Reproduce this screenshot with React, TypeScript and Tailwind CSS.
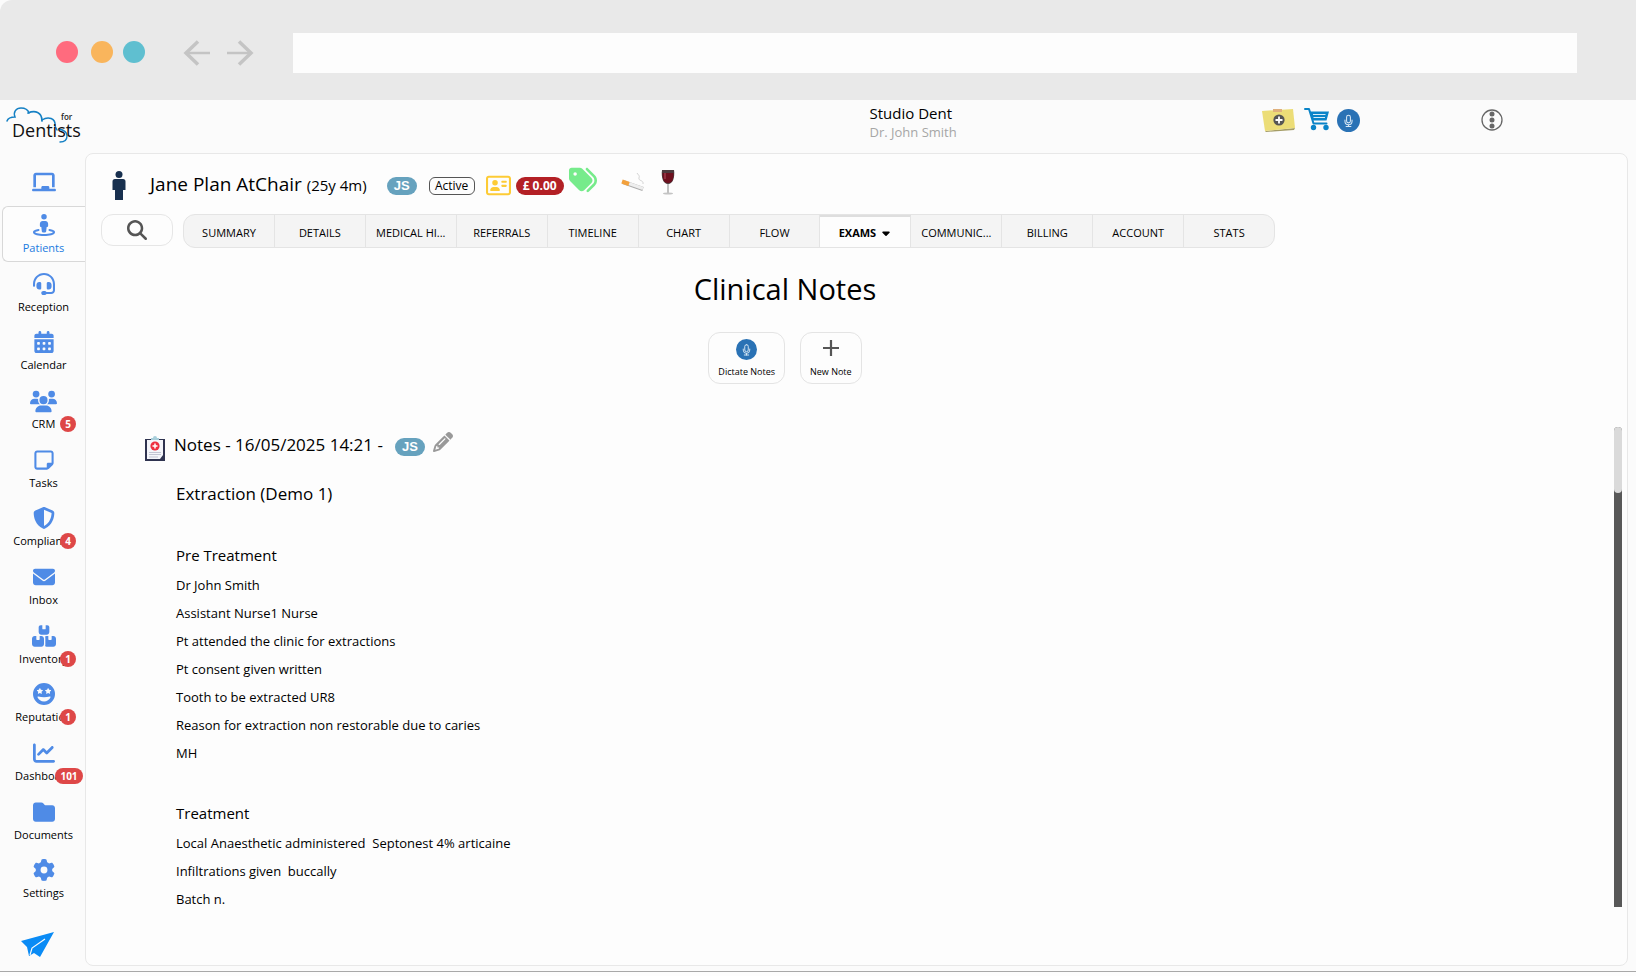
import type { ReactNode } from "react";
import type { IconType } from "react-icons";
import {
  FaBoxesStacked,
  FaCalendarDays,
  FaCaretDown,
  FaChalkboard,
  FaChartLine,
  FaEnvelope,
  FaFaceGrinStars,
  FaFolder,
  FaGear,
  FaHeadset,
  FaMagnifyingGlass,
  FaPencil,
  FaRegAddressCard,
  FaRegNoteSticky,
  FaShieldHalved,
  FaStreetView,
  FaTags,
  FaUsers,
} from "react-icons/fa6";

type NavItem = {
  label: string;
  icon: IconType;
  size?: number;
  badge?: number;
  active?: boolean;
};

const NAV: NavItem[] = [
  { label: "Patients", icon: FaStreetView, active: true },
  { label: "Reception", icon: FaHeadset },
  { label: "Calendar", icon: FaCalendarDays },
  { label: "CRM", icon: FaUsers, size: 27, badge: 5 },
  { label: "Tasks", icon: FaRegNoteSticky },
  { label: "Compliance", icon: FaShieldHalved, badge: 4 },
  { label: "Inbox", icon: FaEnvelope },
  { label: "Inventory", icon: FaBoxesStacked, size: 24, badge: 1 },
  { label: "Reputation", icon: FaFaceGrinStars, badge: 1 },
  { label: "Dashboard", icon: FaChartLine, badge: 101 },
  { label: "Documents", icon: FaFolder },
  { label: "Settings", icon: FaGear },
];

const TABS = [
  "SUMMARY",
  "DETAILS",
  "MEDICAL HI...",
  "REFERRALS",
  "TIMELINE",
  "CHART",
  "FLOW",
  "EXAMS",
  "COMMUNIC...",
  "BILLING",
  "ACCOUNT",
  "STATS",
];

const SECTIONS = [
  {
    title: "Pre Treatment",
    lines: [
      "Dr John Smith",
      "Assistant Nurse1 Nurse",
      "Pt attended the clinic for extractions",
      "Pt consent given written",
      "Tooth to be extracted UR8",
      "Reason for extraction non restorable due to caries",
      "MH",
    ],
  },
  {
    title: "Treatment",
    lines: [
      "Local Anaesthetic administered  Septonest 4% articaine",
      "Infiltrations given  buccally",
      "Batch n.",
    ],
  },
];

function BrowserBar() {
  return (
    <div className="flex h-[100px] shrink-0 items-center rounded-tl-xl bg-[#e9e9e9] pt-1 pr-[59px] pl-14">
      <span className="h-[22px] w-[22px] rounded-full bg-[#ff6b7e]" />
      <span className="ml-[13px] h-[22px] w-[22px] rounded-full bg-[#f9b55c]" />
      <span className="ml-[10px] h-[22px] w-[22px] rounded-full bg-[#5fbfd0]" />
      <button type="button" aria-label="Back" className="mt-[2px] ml-[38px]">
        <svg width="28" height="26" viewBox="0 0 28 26" fill="none" stroke="#c4c4c4" strokeWidth="3.5">
          <path d="M15 1.5 3 13l12 11.5" />
          <path d="M3 13h24" strokeWidth="2.5" />
        </svg>
      </button>
      <button type="button" aria-label="Forward" className="mt-[2px] ml-[15px]">
        <svg width="28" height="26" viewBox="0 0 28 26" fill="none" stroke="#c4c4c4" strokeWidth="3.5">
          <path d="m13 1.5 12 11.5-12 11.5" />
          <path d="M1 13h24" strokeWidth="2.5" />
        </svg>
      </button>
      <input
        type="text"
        aria-label="Address"
        className="mt-[2px] ml-[39px] h-10 min-w-0 flex-1 bg-[#fdfdfd] px-3 outline-none"
      />
    </div>
  );
}

function Logo() {
  return (
    <svg width="82" height="42" viewBox="0 0 82 42" role="img" aria-label="for Dentists">
      <g fill="none" stroke="#1580c4" strokeLinecap="round">
        <path d="M2 17c1-3 4-4 8-4C8 8 11 4 16 4c4 0 7 2 8 5" strokeWidth="1.5" />
        <path d="M23 9c7-3 14-1 14 8" strokeWidth="1.7" />
        <path d="M37 16c6-4 14-2 13 6l2 4" strokeWidth="1.5" />
        <path d="M54 25c5 1 8 4 8 7 0 4-3 6-7 6" strokeWidth="1.4" />
      </g>
      <text x="56" y="16" fontSize="8" fontWeight="600" fontFamily="Open Sans, sans-serif" fill="#222">
        for
      </text>
      <text x="7" y="33" fontSize="18" fontWeight="500" fontFamily="Open Sans, sans-serif" fill="#111">
        Dentists
      </text>
    </svg>
  );
}

function MicIcon({ size }: { size: number }) {
  return (
    <svg width={size} height={size} viewBox="0 0 24 24" fill="none">
      <circle cx="12" cy="12" r="12" fill="#2a72b5" />
      <g stroke="#d8e8f5" strokeWidth="1.1" strokeLinecap="round">
        <rect x="10" y="6.5" width="4" height="8" rx="2" />
        <path d="M8.3 11.5v1.2a3.7 3.7 0 0 0 7.4 0v-1.2M12 16.5v1.8M9.5 18.3h5" />
      </g>
    </svg>
  );
}

function StickyIcon() {
  return (
    <svg width="36" height="26" viewBox="0 0 36 26">
      <path d="m4 24 30-3-1 2-28 2z" fill="#a49c66" />
      <path d="M1 4 32 2l2 19-30 3z" fill="#ecdd77" />
      <path d="M12 2h9v3h-9z" fill="#dfb07c" />
      <circle cx="18" cy="13" r="5.6" fill="#555" />
      <path d="M18 9.5v7M14.5 13h7" stroke="#fff" strokeWidth="1.8" />
    </svg>
  );
}

function CartIcon() {
  return (
    <svg width="26" height="24" viewBox="0 0 26 24" fill="none">
      <path d="M1 2h4l4.5 14.5h13" stroke="#0a84c8" strokeWidth="2" strokeLinecap="round" strokeLinejoin="round" />
      <path d="M6 4.5h19l-2.5 9h-14z" fill="#0a84c8" />
      <path d="M9 7.5h12.5M9.5 10.5H21" stroke="#d7edf8" strokeWidth="1" />
      <circle cx="9.5" cy="20.5" r="2.7" fill="#0a84c8" />
      <circle cx="22" cy="20.5" r="2.7" fill="#0a84c8" />
    </svg>
  );
}

function MoreIcon() {
  return (
    <svg width="22" height="22" viewBox="0 0 22 22">
      <circle cx="11" cy="11" r="10" fill="none" stroke="#666" strokeWidth="1.3" />
      <circle cx="11" cy="5" r="2.5" fill="#666" />
      <circle cx="11" cy="11" r="2.5" fill="#666" />
      <circle cx="11" cy="17" r="2.5" fill="#666" />
    </svg>
  );
}

function PersonIcon() {
  return (
    <svg width="14" height="30" viewBox="0 0 14 30" fill="#18304f">
      <circle cx="7" cy="3.5" r="3.5" />
      <path d="M3 8h8a2.5 2.5 0 0 1 2.5 2.5V19H11v10H3V19H.5v-8.5A2.5 2.5 0 0 1 3 8z" />
    </svg>
  );
}

function CigaretteIcon() {
  return (
    <svg width="24" height="20" viewBox="0 0 24 20" fill="none">
      <path d="m2 10 20 7" stroke="#aaa" strokeWidth="4" />
      <path d="m2 9.5 20 7" stroke="#eee" strokeWidth="3" />
      <path d="m1 9.5 7 2.5" stroke="#f3a13c" strokeWidth="4" />
      <path d="M22 12c1-4-5-3-4-6s-1-3-2-5" stroke="#d4d4d4" strokeWidth="1" />
    </svg>
  );
}

function WineIcon() {
  return (
    <svg width="14" height="26" viewBox="0 0 14 26">
      <path d="M1 1h12c1 7-1 14-6 14S0 8 1 1z" fill="#4b3a3d" />
      <path d="M1.500 4h11c0 6-1 10-5.500 10S1.500 10 1.500 4z" fill="#6e0f1e" />
      <path d="M4 4v6" stroke="#b4505e" strokeWidth="1" />
      <path d="M7 15v9" stroke="#999" strokeWidth="1.2" />
      <ellipse cx="7" cy="24.5" rx="5" ry="1" fill="#c4c4c4" />
    </svg>
  );
}

function ClipboardIcon() {
  return (
    <svg width="20" height="26" viewBox="0 0 20 26">
      <path d="M0 3h20v22H0z" fill="#2f3350" />
      <path d="M2 4h16v15l-3 4H2z" fill="#f4f5fa" />
      <path d="M6 4V2h2a2 2 0 0 1 4 0h2v2z" fill="#a9cfdb" />
      <circle cx="10" cy="10" r="4.6" fill="#ee2f3f" />
      <path d="M10 7.5v5M7.5 10h5" stroke="#fff" strokeWidth="1.5" />
      <path d="M4 16.5h12M4 18.5h12M4 21h9" stroke="#c3c5d3" strokeWidth="1" />
    </svg>
  );
}

function PlaneIcon() {
  return (
    <svg width="33" height="26" viewBox="0 0 33 26" fill="#0a8bf5">
      <path d="M0 9 33 0 19 25l-6-4-5 3-2-9z" />
      <path d="M24 7 11 16l-2 7" fill="none" stroke="#fbfbfb" strokeWidth="1.2" />
    </svg>
  );
}

function Initials() {
  return (
    <span className="flex h-[18px] w-[30px] items-center justify-center rounded-full bg-[#66a2be] font-['Liberation_Sans',sans-serif] text-[13px] font-bold text-white">
      JS
    </span>
  );
}

function Sidebar() {
  return (
    <aside className="flex w-[85px] shrink-0 flex-col">
      <a href="#home" className="h-[60px] pt-1 pl-[5px]">
        <Logo />
      </a>
      <a href="#desk" aria-label="Desk" className="flex h-11 items-center justify-center pl-[3px]">
        <FaChalkboard size={24} className="text-[#4f8be6]" />
      </a>
      <nav className="flex flex-1 flex-col">
        {NAV.map(({ label, icon: Icon, size = 22, badge, active }) => (
          <a
            key={label}
            href={`#${label.toLowerCase()}`}
            className={`relative ml-[2px] flex flex-1 flex-col items-center text-[11px] leading-4 ${
              active ? "text-[#1a7be0]" : "text-black"
            }`}
          >
            {active && (
              <span className="absolute inset-x-0 top-[2px] h-14 rounded-l-md border border-r-0 border-[#d8d8d8] bg-[#fdfdfd]" />
            )}
            <span className="relative mt-[10px] flex h-[22px] items-center text-[#4f8be6]">
              <Icon size={size} />
            </span>
            <span className="relative mt-1">{label}</span>
            {badge && (
              <span
                className={`absolute top-[36px] flex h-4 items-center justify-center rounded-full bg-[#de4747] text-[10px] font-bold text-white ${
                  badge > 99 ? "right-[2px] w-7" : "right-[9px] w-4"
                }`}
              >
                {badge}
              </span>
            )}
          </a>
        ))}
      </nav>
      <a href="#send" aria-label="Send" className="h-[63px] pt-6 pl-[21px]">
        <PlaneIcon />
      </a>
    </aside>
  );
}

function TopBar() {
  return (
    <header className="grid h-[53px] shrink-0 grid-cols-[4fr_2fr_1fr_1fr] pt-[3px]">
      <div />
      <div className="pl-[9px]">
        <p className="text-[15px] leading-5">Studio Dent</p>
        <p className="text-[13px] leading-[18px] text-[#a6a6a6]">Dr. John Smith</p>
      </div>
      <div className="flex items-start gap-[7px] pt-1 pl-[13px]">
        <button type="button" aria-label="Add note">
          <StickyIcon />
        </button>
        <button type="button" aria-label="Cart">
          <CartIcon />
        </button>
        <button type="button" aria-label="Dictate" className="pt-[2px]">
          <MicIcon size={23} />
        </button>
      </div>
      <div className="pt-[6px] pl-[39px]">
        <button type="button" aria-label="More">
          <MoreIcon />
        </button>
      </div>
    </header>
  );
}

function PatientHeader() {
  return (
    <div className="flex h-[60px] items-center pt-[3px] pl-[26px]">
      <PersonIcon />
      <h1 className="mb-[2px] ml-6 text-[19px] leading-6">
        Jane Plan AtChair <span className="text-[15px]">(25y 4m)</span>
      </h1>
      <div className="ml-5 flex items-center">
        <Initials />
        <span className="ml-3 flex h-[18px] w-[46px] items-center justify-center rounded-md border border-[#555] text-[12px]">
          Active
        </span>
        <FaRegAddressCard size={25} className="ml-[11px] text-[#fdcb35]" />
        <span className="ml-[5px] flex h-[18px] w-12 items-center justify-center rounded-full bg-[#b32025] text-[12px] font-bold text-white">
          £ 0.00
        </span>
        <FaTags size={28} className="mb-3 ml-[5px] text-[#76eb8b]" />
        <span className="mb-2 ml-6">
          <CigaretteIcon />
        </span>
        <span className="mb-2 ml-4">
          <WineIcon />
        </span>
      </div>
    </div>
  );
}

function Tabs() {
  return (
    <div className="flex items-start gap-[10px] pr-[352px] pl-[15px]">
      <button
        type="button"
        aria-label="Search"
        className="flex h-8 w-[72px] shrink-0 items-center justify-center rounded-xl border border-[#e6e6e6]"
      >
        <FaMagnifyingGlass size={20} className="text-[#555]" />
      </button>
      <nav className="flex h-[34px] min-w-0 flex-1 overflow-hidden rounded-xl border border-[#e4e4e4] bg-[#f4f4f4]">
        {TABS.map((tab) => {
          const active = tab === "EXAMS";
          return (
            <a
              key={tab}
              href="#tab"
              className={`flex min-w-0 flex-1 items-center justify-center gap-1 border-r border-[#e4e4e4] text-[11px] whitespace-nowrap last:border-r-0 ${
                active ? "border-t-2 border-t-[#dedede] bg-[#fdfdfd] pt-[2px] font-bold" : "pt-1"
              }`}
            >
              {tab}
              {active && <FaCaretDown size={12} />}
            </a>
          );
        })}
      </nav>
    </div>
  );
}

function ActionButton({ label, children }: { label: string; children: ReactNode }) {
  return (
    <button
      type="button"
      className="flex h-[52px] flex-col items-center justify-between rounded-xl border border-[#e4e4e4] px-[9px] pt-[6px] pb-[5px] text-[9px] leading-3"
    >
      {children}
      {label}
    </button>
  );
}

function Notes() {
  return (
    <div className="mt-[43px] mb-12 flex flex-1 pr-[5px]">
      <article className="flex-1 pl-[59px]">
        <div className="flex items-center">
          <span className="mt-[9px]">
            <ClipboardIcon />
          </span>
          <h3 className="ml-[9px] text-[17px] leading-6">Notes - 16/05/2025 14:21 -</h3>
          <span className="mt-1 ml-3">
            <Initials />
          </span>
          <button type="button" aria-label="Edit note" className="mb-[6px] ml-2">
            <FaPencil size={20} className="text-[#999]" />
          </button>
        </div>
        <div className="pl-[31px]">
          <h4 className="mt-5 pb-[3px] text-[17px] leading-6">Extraction (Demo 1)</h4>
          {SECTIONS.map(({ title, lines }) => (
            <section key={title} className="mt-[30px]">
              <h5 className="text-[15px] leading-8">{title}</h5>
              {lines.map((line) => (
                <p key={line} className="text-[13px] leading-7 whitespace-pre-wrap">
                  {line}
                </p>
              ))}
            </section>
          ))}
        </div>
      </article>
      <div className="mb-[10px] w-2 shrink-0 rounded-t-full bg-[#585858]">
        <div className="h-[66px] rounded-full bg-[#dadada]" />
      </div>
    </div>
  );
}

export default function App() {
  return (
    <div className="flex min-h-screen flex-col bg-[#fbfbfb] font-['Open_Sans','Noto_Sans',sans-serif] text-black">
      <BrowserBar />
      <div className="flex flex-1 border-b border-[#a8a8a8]">
        <Sidebar />
        <div className="flex min-w-0 flex-1 flex-col pb-[5px]">
          <TopBar />
          <main className="mr-2 flex flex-1 flex-col rounded-lg border border-[#e8e8e8] bg-[#fdfdfd]">
            <PatientHeader />
            <Tabs />
            <div className="pr-[143px]">
              <h2 className="mt-[21px] text-center text-[29px] leading-10">Clinical Notes</h2>
              <div className="mt-[23px] flex items-center justify-center gap-[15px]">
                <ActionButton label="Dictate Notes">
                  <MicIcon size={21} />
                </ActionButton>
                <ActionButton label="New Note">
                  <svg width="18" height="18" viewBox="0 0 18 18" stroke="#555" strokeWidth="2.2">
                    <path d="M9 1v16M1 9h16" />
                  </svg>
                </ActionButton>
              </div>
            </div>
            <Notes />
          </main>
        </div>
      </div>
      <div className="h-1 bg-[#fdfdfd]" />
    </div>
  );
}
